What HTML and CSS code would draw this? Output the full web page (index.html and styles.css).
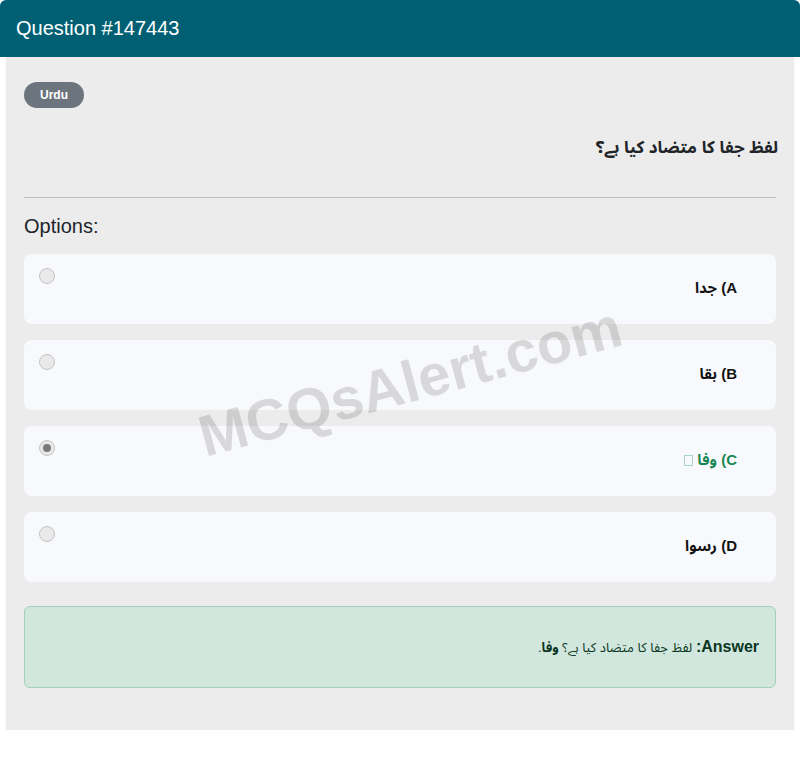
FILE: index.html
```html
<!DOCTYPE html>
<html lang="en">
<head>
<meta charset="utf-8">
<title>Question #147443</title>
<link rel="stylesheet" href="styles.css">
</head>
<body>
<div class="card">
  <div class="card-header">Question #147443</div>
  <div class="card-body">
    <span class="badge">Urdu</span>
    <h5 class="question" dir="rtl">لفظ جفا کا متضاد کیا ہے؟</h5>
    <hr class="divider">
    <div class="options-title">Options:</div>
    <div class="options">
      <div class="option">
        <span class="radio"></span>
        <div class="option-text" dir="rtl">A) جدا</div>
      </div>
      <div class="option">
        <span class="radio"></span>
        <div class="option-text" dir="rtl">B) بقا</div>
      </div>
      <div class="option">
        <span class="radio checked"></span>
        <div class="option-text correct" dir="rtl">C) وفا <span class="tofu"></span></div>
      </div>
      <div class="option">
        <span class="radio"></span>
        <div class="option-text" dir="rtl">D) رسوا</div>
      </div>
    </div>
    <div class="answer" dir="rtl"><strong class="answer-label">Answer:</strong> لفظ جفا کا متضاد کیا ہے؟ <strong>وفا</strong>.</div>
    <div class="watermark">MCQsAlert.com</div>
  </div>
</div>
</body>
</html>
```
FILE: styles.css
```css
html, body {
  margin: 0;
  padding: 0;
  background: #ffffff;
}
body {
  font-family: "Liberation Sans", "Noto Sans Arabic", "DejaVu Sans", Arial, sans-serif;
  color: #212529;
}
.card {
  width: 800px;
}
.card-header {
  height: 57px;
  box-sizing: border-box;
  padding: 0 16px;
  display: flex;
  align-items: center;
  background: #005f73;
  color: #ffffff;
  font-size: 20px;
  border-radius: 6px 6px 0 0;
}
.card-body {
  position: relative;
  margin: 0 6px;
  padding: 25px 18px 42px;
  background: #ececec;
  box-shadow: 0 2px 4px rgba(0, 0, 0, 0.04);
  display: flex;
  flex-direction: column;
  align-items: stretch;
}
.badge {
  align-self: flex-start;
  background: #6c757d;
  color: #ffffff;
  font-size: 12px;
  font-weight: bold;
  line-height: 14px;
  padding: 6px 16px;
  border-radius: 14px;
}
.question {
  margin: 28px -2px 0 0;
  font-size: 17px;
  line-height: 24px;
  font-weight: bold;
  color: #212529;
  text-align: right;
}
.divider {
  margin: 37px 0 0;
  border: 0;
  border-top: 1px solid #bdbdbd;
  height: 0;
}
.options-title {
  margin-top: 16px;
  font-size: 20px;
  line-height: 24px;
  color: #212529;
}
.options {
  margin-top: 16px;
  display: flex;
  flex-direction: column;
  gap: 16px;
}
.option {
  display: flex;
  align-items: flex-start;
  min-height: 70px;
  box-sizing: border-box;
  padding: 14px 39px 0 15px;
  background: #f8f9fc;
  border-radius: 8px;
}
.radio {
  flex: none;
  width: 14px;
  height: 14px;
  border: 1px solid #c4c4c4;
  border-radius: 50%;
  background: #e9e9e9;
  display: flex;
  align-items: center;
  justify-content: center;
}
.radio.checked::after {
  content: "";
  width: 8px;
  height: 8px;
  border-radius: 50%;
  background: #7a7a7a;
}
.option-text {
  flex: 1;
  margin-top: 8px;
  font-size: 15px;
  line-height: 24px;
  font-weight: bold;
  color: #111111;
  text-align: right;
}
.option-text.correct {
  color: #198754;
}
.tofu {
  display: inline-block;
  width: 7px;
  height: 9px;
  border: 1px solid #a8d5bf;
  vertical-align: -1px;
  margin-right: 0;
}
.answer {
  margin-top: 24px;
  padding: 28px 16px 27px;
  background: #d1e7dd;
  border: 1px solid #a3cfbb;
  border-radius: 6px;
  color: #0a3622;
  font-size: 13px;
  line-height: 24px;
  text-align: right;
}
.answer-label {
  font-size: 16px;
}
.watermark {
  position: absolute;
  left: 404px;
  top: 324px;
  transform: translate(-50%, -50%) rotate(-15deg);
  font-size: 58px;
  font-weight: bold;
  color: rgba(0, 0, 0, 0.13);
  white-space: nowrap;
  pointer-events: none;
}
```
